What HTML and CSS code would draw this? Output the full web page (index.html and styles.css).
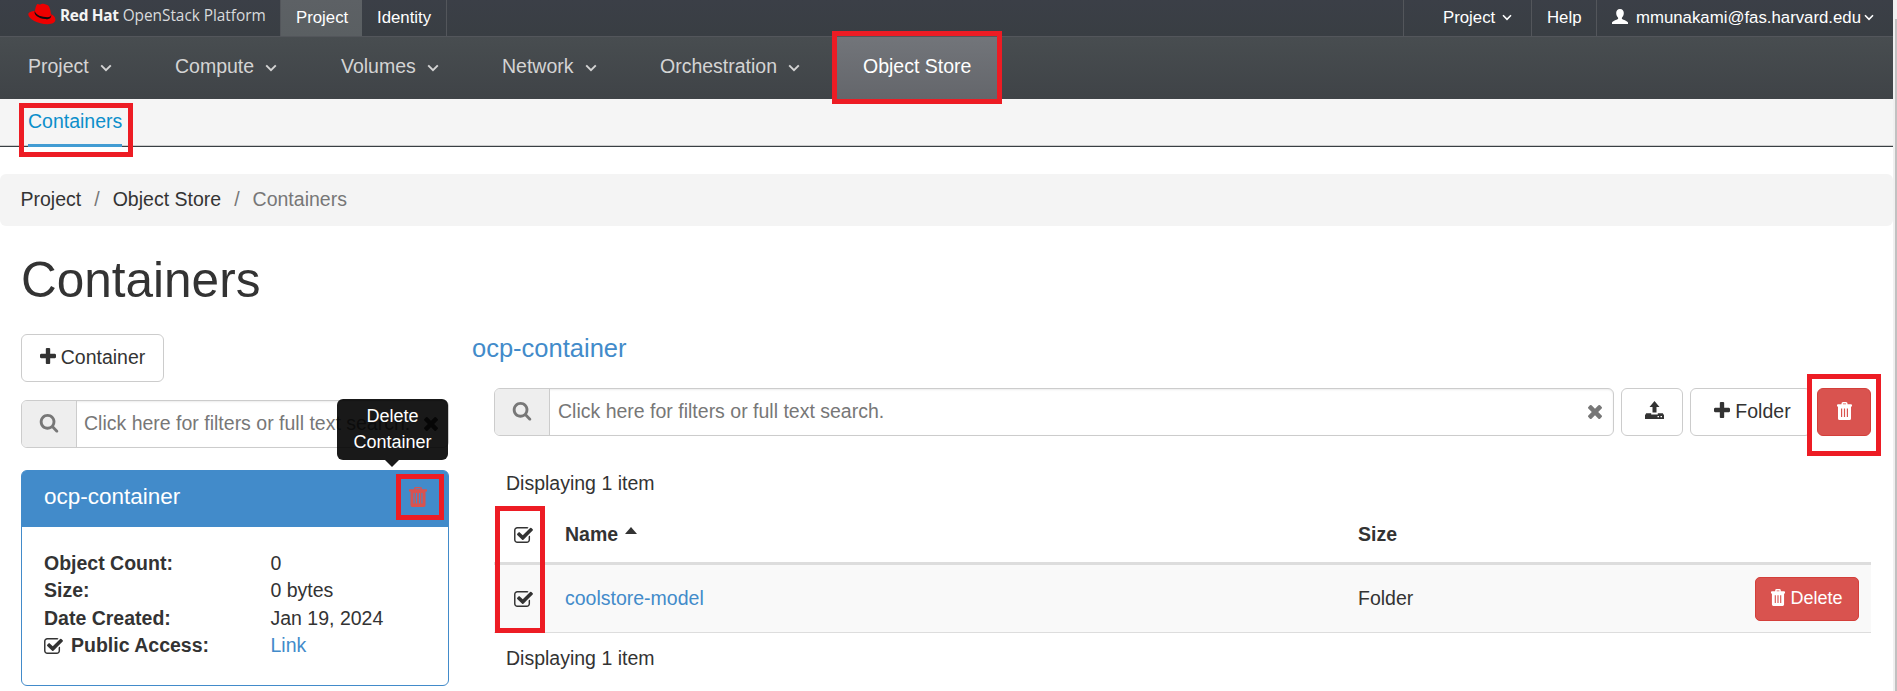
FILE: index.html
```html
<!DOCTYPE html>
<html lang="en">
<head>
<meta charset="utf-8">
<title>Containers - Red Hat OpenStack Platform</title>
<link rel="stylesheet" href="styles.css">
</head>
<body>
<svg class="defs" width="0" height="0" aria-hidden="true">
  <symbol id="search" viewBox="0 128 1792 1792"><path d="M1216 832q0-185-131.500-316.500t-316.500-131.500-316.500 131.500-131.500 316.500 131.500 316.500 316.500 131.500 316.500-131.500 131.500-316.500zm512 832q0 52-38 90t-90 38q-54 0-90-38l-343-342q-179 124-399 124-143 0-273.500-55.500t-225-150-150-225-55.500-273.500 55.500-273.500 150-225 225-150 273.500-55.500 273.500 55.500 225 150 150 225 55.500 273.500q0 220-124 399l343 343q37 37 37 90z"/></symbol>
  <symbol id="plus" viewBox="192 128 1408 1408"><path d="M1600 736v192q0 40-28 68t-68 28h-416v416q0 40-28 68t-68 28h-192q-40 0-68-28t-28-68v-416h-416q-40 0-68-28t-28-68v-192q0-40 28-68t68-28h416v-416q0-40 28-68t68-28h192q40 0 68 28t28 68v416h416q40 0 68 28t28 68z"/></symbol>
  <symbol id="times" viewBox="302 366 1188 1188"><path d="M1490 1322q0 40-28 68l-136 136q-28 28-68 28t-68-28l-294-294-294 294q-28 28-68 28t-68-28l-136-136q-28-28-28-68t28-68l294-294-294-294q-28-28-28-68t28-68l136-136q28-28 68-28t68 28l294 294 294-294q28-28 68-28t68 28l136 136q28 28 28 68t-28 68l-294 294 294 294q28 28 28 68z"/></symbol>
  <symbol id="check" viewBox="64 128 1664 1408"><path d="M1472 930v318q0 119-84.500 203.500t-203.500 84.500h-832q-119 0-203.500-84.500t-84.500-203.500v-832q0-119 84.500-203.500t203.500-84.500h832q63 0 117 25 15 7 18 23 3 17-9 29l-49 49q-10 10-23 10-3 0-9-2-23-6-45-6h-832q-66 0-113 47t-47 113v832q0 66 47 113t113 47h832q66 0 113-47t47-113v-254q0-13 9-22l64-64q10-10 23-10 6 0 12 3 20 8 20 29zm231-489l-814 814q-24 24-57 24t-57-24l-430-430q-24-24-24-57t24-57l110-110q24-24 57-24t57 24l263 263 647-647q24-24 57-24t57 24l110 110q24 24 24 57t-24 57z"/></symbol>
  <symbol id="trash" viewBox="0 0 15 18"><path fill-rule="evenodd" d="M0 3.200q0-1 1-1H4.500V1.500Q4.500 0 6 0h3q1.500 0 1.500 1.500v.7H14q1 0 1 1V4.600H14V16.500q0 1.500-1.500 1.500h-10Q1 18 1 16.500V4.600H0zM6 2.200h3V1.400H6zM4 6.500v8.500h1.200V6.500zM6.900 6.500v8.500h1.200V6.500zM9.800 6.500v8.500H11V6.500z"/></symbol>
  <symbol id="trash-open" viewBox="0 0 18 20"><path fill-rule="evenodd" d="M0 2.800q0-.6.600-.6H5V1.500Q5 0 6.500 0h5Q13 0 13 1.500v.7h4.400q.6 0 .6.600V4.400h-1.500V18q0 2-1.700 2H3.200Q1.500 20 1.500 18V4.400H0zM6.500 2.200h5V1.300h-5zM4.500 6v10.500h1.100V6zM7 6v10.500h1.100V6zM9.900 6v10.500H11V6zM12.400 6v10.500h1.100V6z"/></symbol>
  <symbol id="upload" viewBox="0 0 19 18"><path fill-rule="evenodd" d="M9.500 0L14.500 6H11.500V11.500H7.500V6H4.500zM1.200 12.300H6.200V13.500H12.800V12.300H17.800L19 14.300V18H0V14.300zM12.500 15v1.300h1.500V15zM15.500 15v1.300H17V15z"/></symbol>
  <symbol id="chevron" viewBox="0 0 12 8"><path d="M1.200 1.300L6 6.200l4.800-4.900" fill="none" stroke="currentColor" stroke-width="1.900"/></symbol>
  <symbol id="user" viewBox="0 0 16 15"><path d="M8 0c2.600 0 3.800 1.700 3.800 4 0 2-.8 3.800-1.900 4.700v1.200c1.600 1 5.500 1.700 6.100 3.600V15H0v-1.500c.6-1.900 4.500-2.600 6.100-3.600V8.700C5 7.800 4.200 6 4.200 4 4.200 1.700 5.400 0 8 0z"/></symbol>
</svg>
<div class="page">
  <header class="topbar">
    <div class="brand">
      <svg class="hat" viewBox="0 0 28 22"><path fill="#e00" d="M9.500.9C8.500 1.200 7.300 5 7 7.700 4 8.300.3 9 .3 11.300.3 16 10 21.200 19.500 21.200c5 0 7.900-1.700 7.900-4.600 0-2.600-2-4.600-4.400-5.700C22.600 7.500 21.500 3 19.400 2.100 17.200 1.100 15.500.7 14.300.7c-1.300 0-1.900 1-2.800.9C10.700 1.500 10.200.8 9.500.9z"/><path fill="#140c0e" d="M7 7.700c-.5 2.600 4.300 6 10.500 6.400 4 .3 6-.6 5.500-3.200.9 3.300-.8 5.600-5.800 5.200C11 15.600 4.700 11.500 7 7.700z"/></svg>
      <span class="brand-name"><b>Red Hat</b><span>OpenStack Platform</span></span>
    </div>
    <nav class="tabs"><a class="tab active">Project</a><a class="tab">Identity</a></nav>
    <nav class="tools">
      <a class="tool tool-project">Project<svg class="chev small"><use href="#chevron"/></svg></a>
      <a class="tool tool-help">Help</a>
      <a class="tool tool-user"><svg class="user"><use href="#user"/></svg><span class="mail">mmunakami@fas.harvard.edu</span><svg class="chev small"><use href="#chevron"/></svg></a>
    </nav>
  </header>
  <nav class="mainnav">
    <a class="item w-project">Project<svg class="chev"><use href="#chevron"/></svg></a>
    <a class="item w-compute">Compute<svg class="chev"><use href="#chevron"/></svg></a>
    <a class="item w-volumes">Volumes<svg class="chev"><use href="#chevron"/></svg></a>
    <a class="item w-network">Network<svg class="chev"><use href="#chevron"/></svg></a>
    <a class="item w-orch">Orchestration<svg class="chev"><use href="#chevron"/></svg></a>
    <a class="item active">Object Store<i class="mark mark-store"></i></a>
  </nav>
  <nav class="subnav"><a class="sub">Containers<i class="mark mark-sub"></i></a></nav>
  <div class="crumbs"><span>Project</span><i>/</i><span>Object Store</span><i>/</i><span class="here">Containers</span></div>
  <h1>Containers</h1>
  <main class="columns">
    <aside class="left">
      <button class="btn add"><svg class="plus"><use href="#plus"/></svg>Container</button>
      <div class="search">
        <span class="addon"><svg class="mag"><use href="#search"/></svg></span>
        <span class="field">Click here for filters or full text search.</span>
        <svg class="clear dark"><use href="#times"/></svg>
      </div>
      <section class="card">
        <div class="card-head"><span>ocp-container</span><span class="trash-link"><svg><use href="#trash-open"/></svg><i class="mark mark-trash"></i><span class="tip">Delete Container</span></span></div>
        <dl class="facts">
          <dt>Object Count:</dt><dd>0</dd>
          <dt>Size:</dt><dd>0 bytes</dd>
          <dt>Date Created:</dt><dd>Jan 19, 2024</dd>
          <dt class="pub"><svg class="check"><use href="#check"/></svg>Public Access:</dt><dd class="link">Link</dd>
        </dl>
      </section>
    </aside>
    <section class="right">
      <h2>ocp-container</h2>
      <div class="toolbar">
        <div class="search grow">
          <span class="addon"><svg class="mag"><use href="#search"/></svg></span>
          <span class="field">Click here for filters or full text search.</span>
          <svg class="clear"><use href="#times"/></svg>
        </div>
        <button class="btn up"><svg><use href="#upload"/></svg></button>
        <button class="btn folder"><svg class="plus"><use href="#plus"/></svg>Folder</button>
        <button class="btn danger del-all"><svg><use href="#trash"/></svg><i class="mark mark-all"></i></button>
      </div>
      <div class="count">Displaying 1 item</div>
      <div class="table">
        <div class="row head"><span class="cell-check"><svg class="check"><use href="#check"/></svg><i class="mark mark-check"></i></span><span class="name">Name<i class="caret"></i></span><span>Size</span></div>
        <div class="row body"><span class="cell-check"><svg class="check"><use href="#check"/></svg></span><span class="name link">coolstore-model</span><span>Folder</span><button class="btn danger del"><svg><use href="#trash"/></svg>Delete</button></div>
      </div>
      <div class="count last">Displaying 1 item</div>
    </section>
  </main>
</div>
<div class="scrollbar"><div class="thumb"></div></div>
</body>
</html>
```
FILE: styles.css
```css
* { box-sizing: border-box; }
body {
  margin: 0;
  height: 691px;
  overflow: hidden;
  display: flex;
  background: #fff;
  color: #333;
  font: 19.5px/27.5px "Liberation Sans", Arial, sans-serif;
}
svg { display: block; flex: none; fill: currentColor; }
.defs { position: absolute; }
i { font-style: normal; }
.page { width: 1893px; height: 691px; overflow: hidden; }
.scrollbar { width: 4px; background: #f0f0f0; padding: 19px 0 0 2px; }
.thumb { height: 672px; background: #c1c1c1; }

.topbar {
  height: 37px;
  display: flex;
  background: linear-gradient(#3b3f47, #393e43);
  border-bottom: 1px solid #53565b;
  color: #fff;
  font-size: 16.8px;
  line-height: 36px;
}
.brand { width: 280px; padding: 3px 0 0 28px; display: flex; }
.hat { width: 28px; height: 22px; }
.brand-name { margin: -5px 0 0 4px; display: flex; gap: 4px; font-family: "Open Sans", sans-serif; font-size: 15.4px; color: #d8dadc; white-space: nowrap; letter-spacing: -.03px; }
.brand-name b { color: #f4f4f4; letter-spacing: -.3px; }
.tabs { display: flex; border-left: 1px solid #53565b; border-right: 1px solid #53565b; width: 167px; }
.tab { width: 81px; padding-left: 15px; }
.tab.active { background: linear-gradient(#5d6165, #5a5f62); }
.tools { display: flex; margin-left: auto; }
.tool { border-left: 1px solid #53565b; display: flex; align-items: flex-start; }
.tool-project { width: 128px; padding-left: 39px; }
.tool-help { width: 65px; padding-left: 15px; }
.tool-user { width: 297px; padding-left: 15px; }
.mail { width: 224px; white-space: nowrap; }
.chev { width: 12px; height: 8px; margin-left: 11px; }
.chev.small { width: 10px; height: 7px; margin: 14px 0 0 7px; }
.tool-user .chev.small { margin-left: 4px; }
.user { width: 16px; height: 15px; margin: 9px 8px 0 0; }

.mainnav { height: 62px; display: flex; padding-left: 28px; background: linear-gradient(#484d50, #3f4347); color: #d4d4d4; }
.item { position: relative; display: flex; align-items: center; padding-bottom: 2px; }
.item .chev { margin-top: 1px; }
.w-project { width: 147px; }
.w-compute { width: 166px; }
.w-volumes { width: 161px; }
.w-network { width: 158px; }
.w-orch { width: 175px; }
.item.active { width: 165px; padding-left: 28px; color: #fff; background: linear-gradient(#72757a, #64666b); }
.mark { position: absolute; border: 5px solid #ed1c24; z-index: 3; }
.mark-store { left: -3px; top: -6px; width: 170px; height: 73px; }

.subnav { height: 48px; padding-left: 28px; background: #f5f5f5; border-bottom: 1px solid #393f44; box-shadow: inset 0 -1px #ccc; display: flex; }
.sub { position: relative; height: 48px; padding-top: 9px; color: #0c8fcb; border-bottom: 3px solid #429cd3; }
.mark-sub { left: -9px; top: 4px; width: 114px; height: 54px; }

.crumbs { height: 52px; margin-top: 27px; padding: 12px 20.5px; background: #f4f4f4; border-radius: 6px; display: flex; }
.crumbs i { width: 31.5px; text-align: center; color: #777; }
.crumbs .here { color: #777; }
h1 { margin: 27px 0 0 21px; font-size: 49.5px; line-height: 54px; font-weight: 400; }

.columns { display: flex; padding: 27px 22px 0 21px; gap: 23px; }
.left { width: 428px; }
.right { flex: 1; }
.btn { font: inherit; color: #333; height: 48px; border: 1px solid #ccc; border-radius: 6px; background: #fff; display: flex; align-items: center; justify-content: center; padding: 0; white-space: nowrap; }
.plus { width: 16px; height: 16px; margin: 0 5px 4px 0; }
.add { width: 143px; }
.search { height: 48px; display: flex; align-items: center; border: 1px solid #ccc; border-radius: 6px; box-shadow: inset 0 1px 2px rgba(0,0,0,.08); position: relative; }
.left .search { margin-top: 18px; }
.addon { width: 55px; align-self: stretch; display: flex; align-items: center; justify-content: center; background: #eee; border-right: 1px solid #ccc; border-radius: 5px 0 0 5px; color: #777; }
.mag { width: 20px; height: 20px; }
.field { flex: 1; padding: 0 0 0 8px; color: #777; white-space: nowrap; }
.left .field { padding-left: 7px; }
.clear { width: 14px; height: 14px; margin-right: 11px; color: #777; }
.clear.dark { color: #444; margin-right: 10px; }

.card { margin-top: 22px; height: 216px; border: 1px solid #428bca; border-radius: 6px; }
.card-head { height: 56px; display: flex; justify-content: space-between; padding: 12px 21px 0 22px; background: #428bca; border-radius: 4px 4px 0 0; color: #fff; font-size: 22.5px; }
.trash-link { position: relative; color: #d9534f; padding-top: 4px; }
.trash-link svg { width: 18px; height: 20px; }
.mark-trash { left: -13px; top: -9px; width: 48px; height: 46px; }
.tip { position: absolute; left: -72px; top: -84px; width: 111px; height: 61px; padding: 4px 12px; border-radius: 6px; background: rgba(0,0,0,.9); color: #fff; text-align: center; font-size: 18px; line-height: 26px; z-index: 2; }
.tip::after { content: ""; position: absolute; left: 48px; top: 61px; border: 7px solid transparent; border-top-color: rgba(0,0,0,.9); border-bottom: 0; }
.facts { margin: 0; padding: 22.5px 22px 0; display: grid; grid-template-columns: 226.5px 1fr; grid-auto-rows: 27.5px; }
.facts dt { font-weight: 700; }
.facts dd { margin: 0; }
.facts .pub { display: flex; align-items: center; }
.check { width: 19px; height: 16px; }
.pub .check { margin-right: 8px; }
.link { color: #428bca; }

h2 { margin: 0; font-size: 25.5px; line-height: 28px; font-weight: 400; color: #428bca; }
.toolbar { display: flex; margin: 26px 0 0 22px; }
.grow { flex: 1; }
.up { width: 62px; margin-left: 7px; padding: 0 0 5px 5px; }
.up svg { width: 19px; height: 18px; }
.folder { width: 121px; margin: 0 6px 0 7px; padding-left: 4px; }
.danger { background: #d9534f; border-color: #d43f3a; color: #fff; }
.del-all { width: 54px; position: relative; padding-bottom: 2px; }
.del-all svg { width: 15px; height: 18px; }
.mark-all { left: -11px; top: -15px; width: 74px; height: 82px; }
.count { margin: 34px 0 0 34px; }
.table { margin: 9px 0 0 22px; }
.row { display: grid; grid-template-columns: 71px 793px 397px auto; align-items: center; }
.head { height: 58px; padding-top: 2px; border-bottom: 3px solid #ddd; font-weight: 700; }
.body { height: 68px; padding-top: 1px; background: #f9f9f9; border-bottom: 1px solid #ddd; }
.cell-check { position: relative; padding-left: 20px; }
.mark-check { left: 1px; top: -21px; width: 50px; height: 127px; }
.name { display: flex; }
.caret { margin: 6px 0 0 7px; width: 12px; height: 7px; border: 6px solid transparent; border-bottom: 7px solid #333; border-top: 0; }
.del { width: 104px; height: 44px; font-size: 18px; border-radius: 5px; }
.del svg { width: 14px; height: 17px; margin: 0 5px 2px 0; }
.count.last { margin-top: 12px; }
```
